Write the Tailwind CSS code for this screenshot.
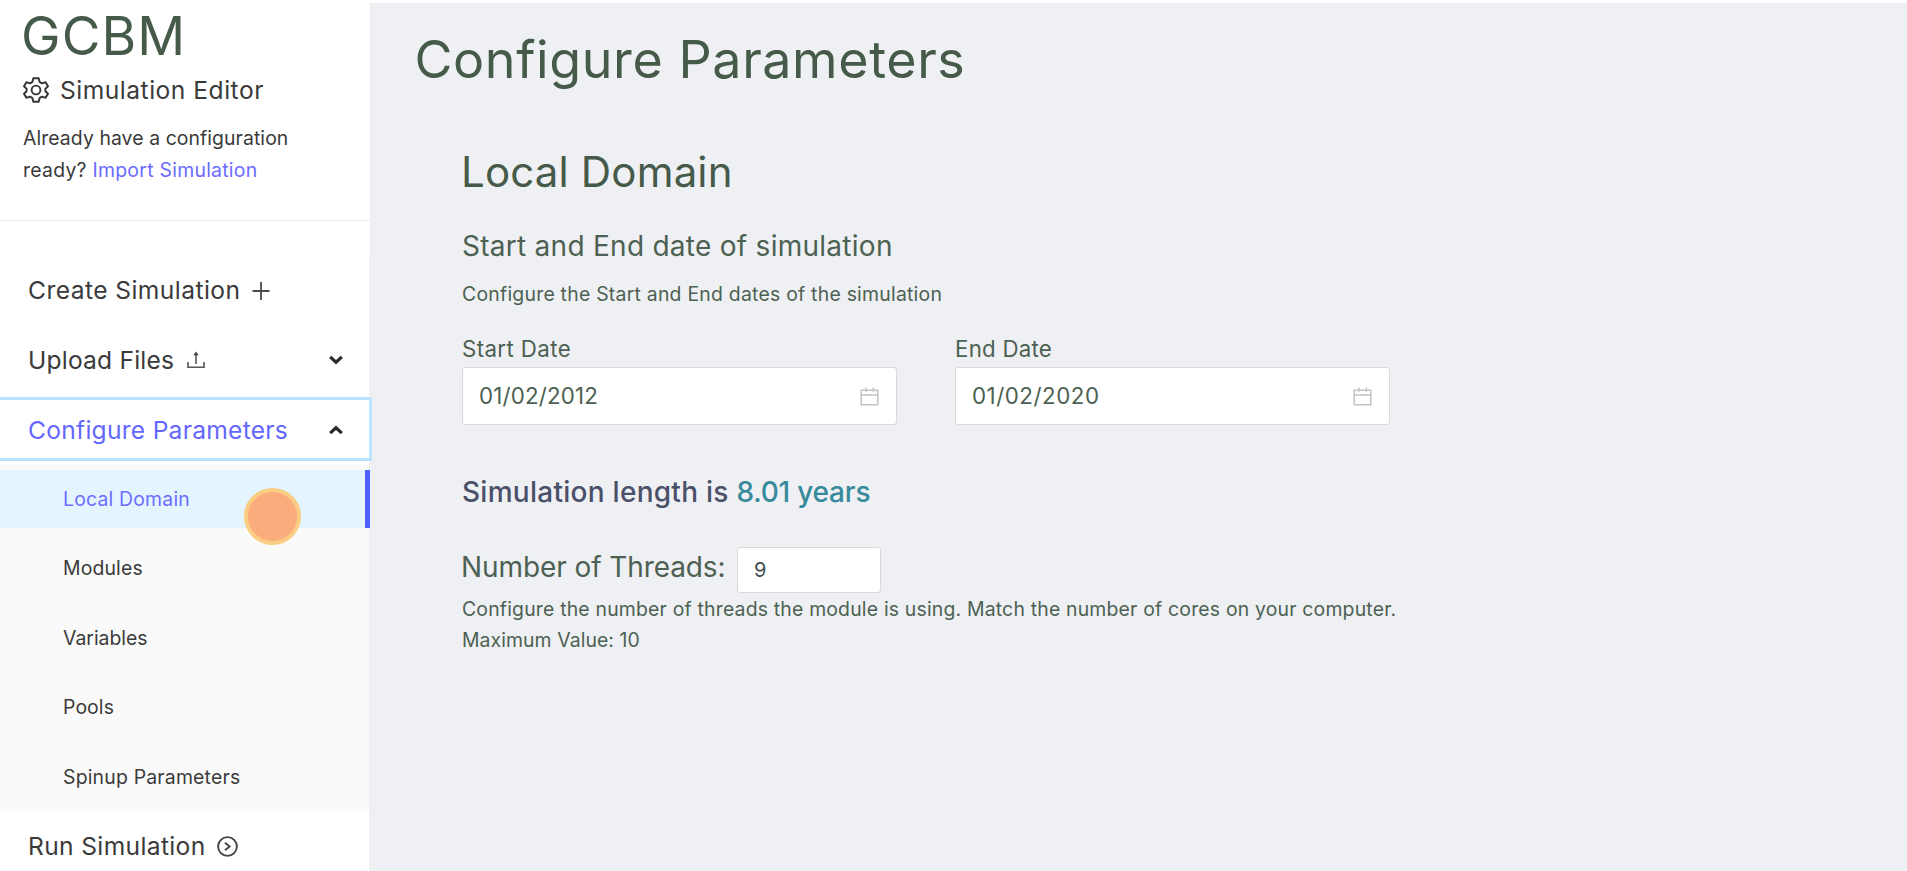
<!DOCTYPE html>
<html lang="en">
<head>
<meta charset="utf-8">
<title>GCBM Simulation Editor</title>
<script src="https://cdn.jsdelivr.net/npm/@tailwindcss/browser@4"></script>
</head>
<body class="bg-white font-['Inter','Noto_Sans',sans-serif] text-[#3a3a3a]">
<div class="flex h-[871px] w-full overflow-hidden">
  <aside class="w-[370px] shrink-0 bg-white">
    <header class="flex h-[221px] flex-col border-b-[1.5px] border-[#ededed] pl-[23px] whitespace-nowrap">
      <h1 class="-ml-[2px] h-[72px] text-[53px] leading-[73px] tracking-[1.1px] text-[#455a48]">GCBM</h1>
      <div class="flex h-[35px] items-center gap-[11px]">
        <svg class="size-[26px]" viewBox="0 0 26 26" fill="none" stroke="#333333" stroke-width="1.9" stroke-linejoin="round"><path d="M10.300 1.200h5.400l.8 3.700 2.500 1.500 3.600-1.200 2.400 4.100-2.600 2.400v2.600l2.600 2.400-2.400 4.100-3.600-1.200-2.500 1.500-.8 3.700h-5.400l-.8-3.700L7 19.600l-3.600 1.200L1 16.700l2.600-2.400v-2.600L1 9.300l2.400-4.100L7 6.400l2.500-1.500z"/><circle cx="13" cy="13" r="4.400"/></svg>
        <span class="pt-px text-[24.6px] leading-[35px] tracking-[0.5px]">Simulation Editor</span>
      </div>
      <p class="mt-[16px] text-[19.4px] leading-[31.7px] tracking-[0.08px]">Already have a configuration<br><span class="tracking-[0.27px]">ready? <a class="text-[#6b6bff]">Import Simulation</a></span></p>
    </header>
    <nav class="mt-[35px] h-[640px] w-[370px] border-r-[1.5px] border-[#f0f0f0] text-[24.6px] whitespace-nowrap">
      <div class="flex h-[69.35px] items-center gap-[12px] pl-[28px]">
        <span class="tracking-[0.43px]">Create Simulation</span>
        <svg class="size-[18px]" viewBox="0 0 18 18" stroke="#4a4a4a" stroke-width="1.8"><path d="M9 0v18M0.500 9h17"/></svg>
      </div>
      <div class="flex h-[69.35px] items-center pl-[28px] pr-[26px]">
        <span class="tracking-[0.2px]">Upload Files</span>
        <svg class="ml-[13px] size-[18px]" viewBox="0 0 18 18" fill="none" stroke="#555555" stroke-width="1.6"><path d="M1 11v5.200h16V11M9 13V3"/><path d="M9 .6 6.300 4.300h5.400z" fill="#444" stroke="none"/></svg>
        <svg class="ml-auto h-[10px] w-[14px]" viewBox="0 0 14 10" fill="none" stroke="#2b2b2b" stroke-width="3.200"><path d="M1.200 1.800 7 7.200l5.800-5.400"/></svg>
      </div>
      <div class="flex h-[69.35px] items-center">
        <div class="relative z-10 flex h-[58px] w-[369px] shrink-0 items-center bg-white pl-[28px] pr-[26px] ring-3 ring-[#bae3ff]">
          <span class="pt-[2px] tracking-[0.26px] text-[#6467ff]">Configure Parameters</span>
          <svg class="mt-[2px] ml-auto h-[10px] w-[14px]" viewBox="0 0 14 10" fill="none" stroke="#2b2b2b" stroke-width="3.200"><path d="m1.200 8.200 5.800-5.400 5.800 5.400"/></svg>
        </div>
      </div>
      <div class="bg-[#fafafa] text-[19.4px]">
        <div class="flex h-[69.35px] items-center">
          <div class="relative flex h-[58px] w-[370px] shrink-0 items-center border-r-5 border-[#4d61fc] bg-[#e5f5ff] pt-[2px] pl-[63px] text-[#6b6eff]">
            <span class="tracking-[0.2px]">Local Domain</span>
            <span class="absolute top-[18px] left-[244px] size-[57px] rounded-full border-[4.500px] border-[#fbcd83] bg-[#faac7c]"></span>
          </div>
        </div>
        <div class="flex h-[69.35px] items-center pt-[2px] pl-[63px] tracking-[0.15px]">Modules</div>
        <div class="flex h-[69.35px] items-center pt-[2px] pl-[63px]">Variables</div>
        <div class="flex h-[69.35px] items-center pt-[2px] pl-[63px] tracking-[0.1px]">Pools</div>
        <div class="flex h-[69.35px] items-center pt-[2px] pl-[63px] tracking-[0.2px]">Spinup Parameters</div>
      </div>
      <div class="flex h-[69.35px] items-center gap-[11px] pt-[2px] pl-[28px]">
        <span class="tracking-[0.35px]">Run Simulation</span>
        <svg class="size-[21px]" viewBox="0 0 21 21" fill="none" stroke="#444444" stroke-width="1.900"><circle cx="10.500" cy="10.500" r="9.400"/><path d="m8 6.800 4.600 3.700L8 14.200"/></svg>
      </div>
    </nav>
  </aside>
  <main class="mt-[3px] grow bg-[#eff0f4] whitespace-nowrap text-[#4c6152]">
    <h1 class="ml-[44.500px] pt-[17px] text-[52px] leading-[79px] tracking-[0.6px] text-[#455a48]">Configure Parameters</h1>
    <section class="ml-[92px]">
      <h2 class="-ml-[1px] pt-[43px] text-[42px] leading-[60px] tracking-[0.16px] text-[#455a48]">Local Domain</h2>
      <h3 class="pt-[24px] text-[28px] leading-[40px] tracking-[0.27px]">Start and End date of simulation</h3>
      <p class="pt-[12px] text-[19.4px] leading-[32px] tracking-[0.24px]">Configure the Start and End dates of the simulation</p>
      <div class="mt-[22px] flex gap-[58px]">
        <div class="w-[435px]">
          <label class="block h-[34px] text-[22.300px] leading-[34px] tracking-[0.38px]">Start Date</label>
          <div class="mt-px flex h-[58px] items-center justify-between rounded-[3px] border-[1.500px] border-[#d9d9d9] bg-white pr-[17px] pl-[16px]">
            <span class="text-[22.3px] tracking-[0.18px]">01/02/2012</span>
            <svg class="size-[19px]" viewBox="0 0 19 19" fill="none" stroke="#c3c3c3" stroke-width="1.500"><path d="M1.200 3.200h16.600v14.500H1.200zM1.200 8h16.600M6 .5v4.300M13.300 .5v4.300"/></svg>
          </div>
        </div>
        <div class="w-[435px]">
          <label class="block h-[34px] text-[22.300px] leading-[34px] tracking-[0.24px]">End Date</label>
          <div class="mt-px flex h-[58px] items-center justify-between rounded-[3px] border-[1.500px] border-[#d9d9d9] bg-white pr-[17px] pl-[16px]">
            <span class="text-[22.3px] tracking-[0.53px]">01/02/2020</span>
            <svg class="size-[19px]" viewBox="0 0 19 19" fill="none" stroke="#c3c3c3" stroke-width="1.500"><path d="M1.200 3.200h16.600v14.500H1.200zM1.200 8h16.600M6 .5v4.300M13.300 .5v4.300"/></svg>
          </div>
        </div>
      </div>
      <p class="mt-[47px] text-[28px] leading-[40px] font-medium tracking-[0.27px] text-[#4a5069]">Simulation length is <span class="tracking-[-0.22px] text-[#368a9b]">8.01 years</span></p>
      <div class="mt-[34.500px] flex h-[46px] items-center">
        <span class="-ml-[1px] -mt-[5px] w-[276px] text-[28px] leading-[40px] tracking-[-0.09px]">Number of Threads:</span>
        <div class="flex h-[46px] w-[144px] items-center rounded-[3px] border-[1.500px] border-[#d9d9d9] bg-white pl-[16px] text-[20px] text-[#3f4d52]">9</div>
      </div>
      <p class="mt-px text-[19.4px] leading-[31.7px] tracking-[0.193px]">Configure the number of threads the module is using. Match the number of cores on your computer.<br><span class="tracking-[0.08px]">Maximum Value: 10</span></p>
    </section>
  </main>
</div>
</body>
</html>
